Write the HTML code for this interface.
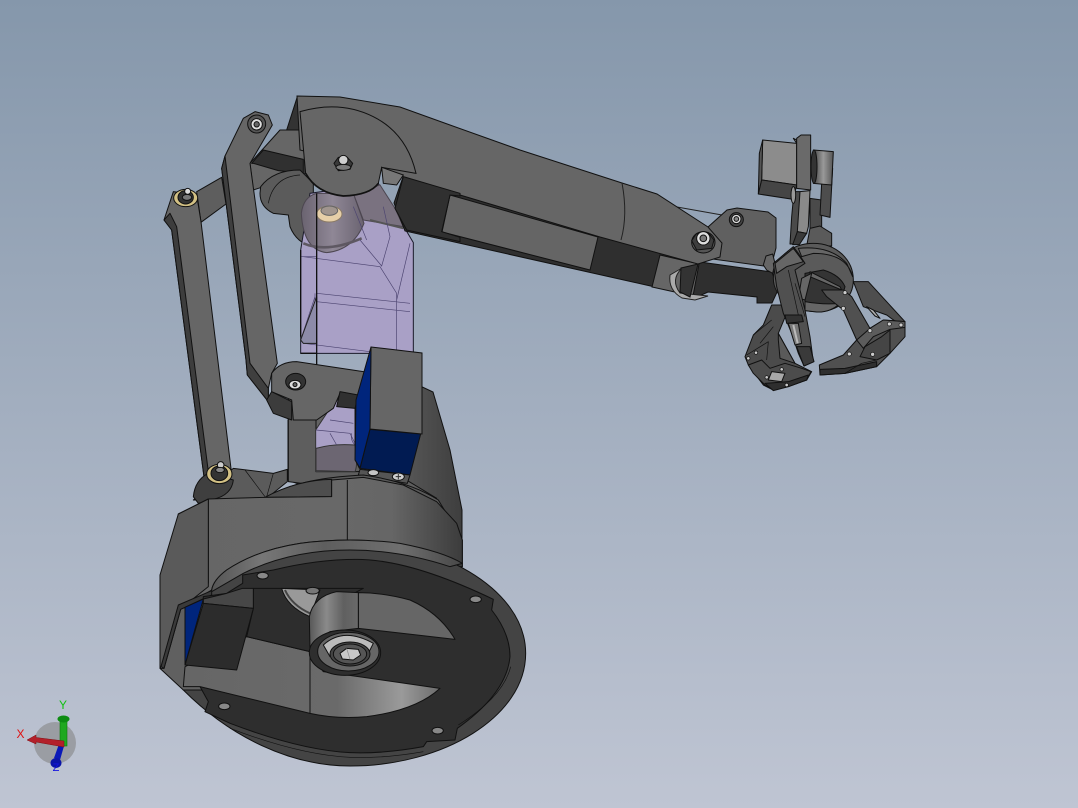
<!DOCTYPE html>
<html><head><meta charset="utf-8"><title>Robot arm CAD view</title>
<style>
html,body{margin:0;padding:0;width:1078px;height:808px;overflow:hidden}
body{background:linear-gradient(180deg,#8597ab 0%,#bfc5d3 100%)}
svg{display:block;position:absolute;left:0;top:0}
text{font-family:"Liberation Sans",sans-serif}
</style></head><body>
<svg width="1078" height="808" viewBox="0 0 1078 808" xmlns="http://www.w3.org/2000/svg">
<defs>
<linearGradient id="drum" x1="0" x2="1" y1="0" y2="0"><stop offset="0" stop-color="#666"/><stop offset=".55" stop-color="#686868"/><stop offset=".75" stop-color="#666"/><stop offset="1" stop-color="#3c3c3c"/></linearGradient>
<linearGradient id="back" x1="0" x2="1" y1="0" y2="0"><stop offset="0" stop-color="#666"/><stop offset=".6" stop-color="#5c5c5c"/><stop offset="1" stop-color="#3e3e3e"/></linearGradient>
<linearGradient id="rim" x1="0" x2="1" y1="0" y2="0"><stop offset="0" stop-color="#555"/><stop offset=".2" stop-color="#777"/><stop offset=".45" stop-color="#5e5e5e"/><stop offset=".75" stop-color="#6f6f6f"/><stop offset="1" stop-color="#484848"/></linearGradient>
<linearGradient id="cyl" x1="0" x2="1" y1="0" y2="0"><stop offset="0" stop-color="#585858"/><stop offset=".35" stop-color="#8a8a8a"/><stop offset=".7" stop-color="#606060"/><stop offset="1" stop-color="#6a6a6a"/></linearGradient>
<linearGradient id="low" x1="0" x2="1" y1="0" y2="0"><stop offset="0" stop-color="#666"/><stop offset=".6" stop-color="#6a6a6a"/><stop offset=".85" stop-color="#9a9a9a"/><stop offset="1" stop-color="#6c6c6c"/></linearGradient>
<linearGradient id="pul" x1="0" x2="1" y1="0" y2="0"><stop offset="0" stop-color="#6a6370"/><stop offset=".5" stop-color="#8f8796"/><stop offset="1" stop-color="#6a6370"/></linearGradient>
<linearGradient id="rol" x1="0" x2="1" y1="0" y2="0"><stop offset="0" stop-color="#444"/><stop offset=".5" stop-color="#999"/><stop offset="1" stop-color="#555"/></linearGradient>
</defs>

<!-- Rear drum -->
<path d="M418 385L433 392L450 450L462 510V570L420 560L340 500L288 480L288 420Z" fill="url(#back)" stroke="#111"/>

<!-- shoulder -->
<g transform="translate(140 80) scale(.33333)" stroke="#111" stroke-width="3" stroke-linejoin="round">
 <path d="M170 335L245 292L258 372L183 427Z" fill="#5e5e5e"/>
 <path d="M330 250L420 150L490 150L495 280L340 330Z" fill="#666"/>
 <path d="M440 150L472 50L482 150Z" fill="#333"/>
 <path d="M335 250L370 210L490 238V280L415 272L340 250Z" fill="#303030"/>
 <path d="M362 320Q400 270 480 270L520 310V500Q470 490 450 440L445 405L400 400Q360 380 360 340Z" fill="#5b5b5b"/>
 <path d="M385 370Q400 290 480 285" fill="none" stroke-width="2"/>
</g>

<!-- Purple translucent body -->
<g transform="translate(140 80) scale(.33333)" stroke="#1a1a2a" stroke-width="3">
 <path d="M482 510V820H820V488L715 310L510 340Z" fill="#a9a0c6"/>
 <path d="M484 400Q490 350 530 340L640 340L672 430Q640 510 560 518Q490 510 484 400Z" fill="url(#pul)" stroke="#4c4650"/>
 <path d="M490 490q70 30 175-15" fill="none" stroke="#5e5862" stroke-width="8"/>
 <ellipse cx="568" cy="402" rx="38" ry="24" fill="#e6cfa8" stroke="#8a7a66"/>
 <ellipse cx="568" cy="392" rx="25" ry="14" fill="#a0958e" stroke="#666"/>
 <path d="M670 420L790 440L765 385L720 315L640 340Z" fill="#7a7280" stroke="#4c4650"/>
 <path d="M690 420L790 445" stroke="#555" stroke-width="6" fill="none"/>
 <path d="M490 530L720 560L770 640V810M530 640L810 670M530 665L810 695M490 790L810 830M770 660L810 490M660 480L725 558L750 470L730 380M640 380L680 480M482 530H530M482 780L525 650M525 640V790H490" fill="none" stroke="#4c4470" stroke-width="2"/>
 <path d="M490 790H530V650L482 780Z" fill="#8d8ba8" stroke="#222"/>
 <path d="M482 510V770M530 340V855M482 820H530" fill="none" stroke="#111" stroke-width="4"/>
</g>

<!-- Main arm -->
<path d="M403 177L700 262L772 272L778 290L772 303H757V297L708 292L697 297L655 287L405 231L394 203Z" fill="#2f2f2f" stroke="#111"/>
<path d="M450 195L598 237L590 270L442 232Z" fill="#656565" stroke="#111"/>
<path d="M660 255L699 264L693 296L652 287Z" fill="#666" stroke="#111"/>
<path d="M677 207L722 215" stroke="#222" fill="none"/>
<path d="M708 227L727 210L737 208L768 212L776 218V248L771 267L705 258Z" fill="#606060" stroke="#111"/>
<path d="M297 96L340 97L400 107L450 125L520 150L622 183L657 194L708 227L722 243L720 257L698 264L600 237L450 192L403 177L380 170L300 150Z" fill="#666" stroke="#111"/>
<path d="M622 183Q628 215 621 240" fill="none" stroke="#222"/>
<path d="M682 268Q670 280 680 293L708 296L695 300L682 298Q668 290 670 275Z" fill="#aaa" stroke="#222"/>
<path d="M681 268L698 264L690 297L680 292Z" fill="#333" stroke="#111"/>

<!-- Cover plate -->
<g transform="translate(140 80) scale(.33333)" stroke="#111" stroke-width="3">
 <path d="M480 95Q600 60 700 110Q800 160 828 280L725 262L715 310Q690 345 610 348Q530 340 497 280Z" fill="#666"/>
 <path d="M497 280Q530 340 610 348Q690 345 715 310" fill="none" stroke-width="5"/>
 <path d="M790 290L960 340V348L930 345L905 455L960 472V485L800 450L765 385Z" fill="#303030"/>
 <path d="M725 262L790 285L770 315L730 310Z" fill="#777"/>
 <polygon points="582,250 595,232 622,232 638,250 630,268 595,272" fill="#3a3a3a"/>
 <circle cx="610" cy="240" r="14" fill="#cfcfcf"/>
 <ellipse cx="610" cy="262" rx="22" ry="9" fill="#7a7a7a"/>
</g>

<!-- Links front -->
<g transform="translate(140 80) scale(.33333)" stroke="#111" stroke-width="3" stroke-linejoin="round">
 <path d="M72 420L100 335L170 345L183 425L276 1190H192L95 450Z" fill="#666"/>
 <path d="M72 420L95 450L192 1190H207L110 440L90 400Z" fill="#3d3d3d"/>
 <ellipse cx="137" cy="354" rx="36" ry="26" fill="#d2c084"/>
 <ellipse cx="137" cy="352" rx="23" ry="20" fill="#333"/>
 <circle cx="143" cy="334" r="9" fill="#ddd"/>
 <ellipse cx="141" cy="352" rx="14" ry="9" fill="#777"/>
 <path d="M245 265L255 228L310 115L345 95L385 105L397 135L330 250L412 850L395 880L385 925L385 965L322 885L318 840Z" fill="#666"/>
 <path d="M245 265L255 228L330 850L385 925L385 965L322 885L318 840Z" fill="#3f3f3f"/>
 <circle cx="350" cy="132" r="27" fill="#555"/>
 <circle cx="350" cy="133" r="17" fill="#ddd"/>
 <circle cx="350" cy="133" r="8" fill="#666"/>
</g>

<!-- Base -->
<g transform="translate(150 400) scale(.33333)" stroke="#111" stroke-width="3" stroke-linejoin="round">
 <path d="M415 -50L498 -50V215L620 215L720 210L860 295L760 290L415 245Z" fill="#5e5e5e"/>
 <path d="M498 0Q505 30 540 15L530 40L497 90V215L615 215V0Z" fill="#a9a0c6" stroke="#333"/>
 <path d="M498 145Q550 130 615 135Q625 190 615 215L498 212Z" fill="#6c6672" stroke="#333"/>
 <path d="M498 90L600 100L615 130M540 60L610 70M540 100L560 135M605 100Q600 120 615 135" fill="none" stroke="#4c4470" stroke-width="2"/>
 <path d="M615 -50L672 -50L660 88L628 205L616 180Z" fill="#00257c"/>
 <path d="M660 88L812 102L780 225L630 205Z" fill="#011b52"/>
 <path d="M630 208L780 225L772 250L625 225Z" fill="#555"/>
 <ellipse cx="670" cy="218" rx="16" ry="9" fill="#c5c5c5"/>
 <ellipse cx="745" cy="230" rx="18" ry="11" fill="#cfcfcf"/>
 <path d="M737 230h16M745 222v16" stroke="#333"/>
 <path d="M250 205L370 220L412 208V245L350 295L130 300Z" fill="#5b5b5b"/>
 <path d="M285 210L345 290M370 220L350 290" fill="none" stroke-width="2"/>
 <path d="M130 290Q135 240 175 220L250 240Q245 285 190 298L145 310Z" fill="#3f3f3f"/>
 <ellipse cx="208" cy="222" rx="38" ry="29" fill="#d2c084"/>
 <ellipse cx="208" cy="220" rx="25" ry="22" fill="#333"/>
 <circle cx="212" cy="195" r="10" fill="#ccc"/>
 <ellipse cx="210" cy="210" rx="13" ry="8" fill="#888"/>
 <path d="M355 290Q440 235 640 225Q780 245 865 300L937 420V500L400 300Z" fill="#595959"/>
 <path d="M345 292Q440 240 545 238V290Z" fill="#4e4e4e"/>
 <path d="M85 342L175 297L345 292L545 290V240L640 232L760 255L860 305L920 370L937 420V500L300 500L190 570L100 620L85 620Z" fill="url(#drum)"/>
 <path d="M175 297V550M592 240V420" fill="none"/>
 <!-- disk outer -->
 <path d="M185 570Q190 540 230 510Q320 450 450 430Q525 420 600 420C850 420 1127 560 1127 760C1127 950 880 1098 600 1098C420 1098 240 1010 100 870V620Z" fill="#444"/>
 <path d="M185 570Q190 540 230 510Q320 450 450 430Q600 410 750 430Q880 455 937 490L900 500Q750 450 600 450Q420 450 280 520L185 575Z" fill="url(#rim)"/>
 <!-- left frame -->
 <path d="M85 342L175 297V560L100 620H85L35 800L30 805V525Z" fill="#5a5a5a"/>
 <path d="M92 628L185 585V870H100L30 805L42 805Z" fill="#606060"/>
 <path d="M185 572L85 615L33 800L42 805L92 628L185 585Z" fill="#3a3a3a"/>
 <!-- face -->
 <path d="M278 525L370 510Q500 478 620 478Q780 478 1030 598L1025 630Q1080 700 1080 770Q1070 880 922 985L915 1020L830 1025L820 1040Q700 1062 600 1058Q450 1050 240 970L165 935L175 905L150 860L160 590L230 580L278 550Z" fill="#2e2e2e"/>
 <path d="M1082 800Q1060 890 925 975M240 985Q450 1065 600 1072Q700 1076 820 1055" fill="none" stroke-width="2"/>
 <!-- interior -->
 <path d="M105 800L290 710L480 755L520 815L870 865Q800 930 650 950Q560 958 480 940L150 860L100 860Z" fill="url(#low)"/>
 <path d="M480 755V940" fill="none"/>
 <path d="M310 565L640 565L480 650V755L290 710L310 625Z" fill="#2d2d2d"/>
 <path d="M160 597L230 580L278 565H310V625L160 610Z" fill="#474747"/>
 <path d="M395 565Q410 620 480 650L510 570Z" fill="#999"/>
 <path d="M405 570Q425 615 480 640" fill="none" stroke="#444" stroke-width="6"/>
 <ellipse cx="488" cy="572" rx="20" ry="10" fill="#777"/>
 <path d="M160 610L310 625L260 810L105 795Z" fill="#2c2c2c"/>
 <path d="M160 597L105 622V795Z" fill="#00257c"/>
 <path d="M625 578Q700 578 780 600Q870 640 915 718L625 685Z" fill="#666"/>
 <path d="M478 650Q490 590 560 575L625 578V685L540 695L480 745Z" fill="url(#cyl)"/>
 <ellipse cx="585" cy="758" rx="107" ry="68" fill="#2e2e2e"/>
 <ellipse cx="595" cy="755" rx="92" ry="58" fill="#666"/>
 <path d="M520 735Q580 680 670 730L650 770H540Z" fill="#bbb"/>
 <ellipse cx="600" cy="762" rx="60" ry="36" fill="#444"/>
 <ellipse cx="600" cy="762" rx="50" ry="30" fill="#555"/>
 <polygon points="570,760 590,745 625,748 632,765 610,780 577,777" fill="#c9c9c9"/>
 <path d="M590 745L600 778" fill="none" stroke="#888" stroke-width="2"/>
 <ellipse cx="338" cy="527" rx="17" ry="10" fill="#888"/>
 <ellipse cx="977" cy="598" rx="17" ry="10" fill="#888"/>
 <ellipse cx="223" cy="919" rx="17" ry="10" fill="#888"/>
 <ellipse cx="863" cy="992" rx="17" ry="10" fill="#888"/>
</g>

<!-- Lower pivot plate -->
<g transform="translate(140 80) scale(.33333)" stroke="#111" stroke-width="3" stroke-linejoin="round">
 <path d="M395 880Q420 845 470 845L690 878L665 950L600 940L580 985L530 1020H460L455 960L395 935Z" fill="#666"/>
 <path d="M395 935L455 965V1020L400 1000L380 960Z" fill="#3c3c3c"/>
 <path d="M600 935L655 945L645 985L590 980Z" fill="#303030"/>
 <ellipse cx="467" cy="905" rx="30" ry="25" fill="#333"/>
 <ellipse cx="465" cy="914" rx="18" ry="13" fill="#ddd"/>
 <circle cx="465" cy="914" r="6" fill="#666"/>
</g>

<!-- Blue box front face -->
<path d="M371 347L422 353V434L370 429Z" fill="#666" stroke="#111"/>
<path d="M371 347L356 400L355 460L360 468L370 429Z" fill="#00257c" stroke="#111"/>

<!-- Wrist bolts -->
<g transform="translate(640 120) scale(.33333)" stroke="#111" stroke-width="3" stroke-linejoin="round">
 <ellipse cx="190" cy="367" rx="35" ry="32" fill="#555"/>
 <polygon points="155,362 168,342 205,338 222,360 215,385 170,390" fill="#3e3e3e"/>
 <circle cx="190" cy="355" r="20" fill="#ddd"/>
 <circle cx="190" cy="355" r="10" fill="#777"/>
 <circle cx="289" cy="299" r="21" fill="#444"/>
 <circle cx="289" cy="297" r="14" fill="#ddd"/>
 <circle cx="289" cy="297" r="7" fill="#888"/>
 <!-- motor -->
 <path d="M510 235L545 240V320L510 325Z" fill="#4a4a4a"/>
 <path d="M545 190L578 145L570 292L540 285Z" fill="#4d4d4d"/>
 <path d="M368 60L470 70L470 195L365 180Z" fill="#8c8c8c"/>
 <path d="M368 60L358 100L355 222L365 180Z" fill="#555"/>
 <path d="M365 180L470 195L460 238L355 222Z" fill="#454545"/>
 <path d="M460 55L470 70V60Z" fill="#999"/>
 <path d="M470 55L483 45H512V210L470 205Z" fill="#6a6a6a"/>
 <path d="M520 90L580 95L575 195L520 190Z" fill="url(#rol)"/>
 <ellipse cx="522" cy="140" rx="9" ry="50" fill="#333"/>
 <path d="M455 290L462 215L480 215L478 372H450Z" fill="#4a4a4a"/>
 <ellipse cx="460" cy="225" rx="7" ry="25" fill="#999"/>
 <path d="M480 215L510 212L505 320L500 340L472 335Z" fill="#8a8a8a"/>
 <path d="M472 335L500 340L478 374L458 374Z" fill="#3a3a3a"/>
 <path d="M510 325L540 318L575 340V378H500Z" fill="#5a5a5a"/>
</g>

<!-- Gripper -->
<g transform="translate(730 240) scale(.33333)" stroke="#111" stroke-width="3" stroke-linejoin="round">
 <path d="M370 125H415L470 185L525 245V265L470 225L400 200Z" fill="#4e4e4e"/>
 <path d="M250 10C320 10 370 60 370 120C370 170 330 215 260 215C190 215 130 170 130 115C130 60 180 10 250 10Z" fill="#5a5a5a"/>
 <path d="M205 25Q300 15 350 70L368 110Q350 40 250 40L215 50Z" fill="#666"/>
 <path d="M225 100L280 90Q330 105 345 140L335 175L320 195L280 210H225Z" fill="#343434"/>
 <path d="M225 185Q280 195 330 190Q300 218 260 216L225 212Z" fill="#666"/>
 <path d="M240 95L330 140L335 150L240 110Z" fill="#666"/>
 <path d="M215 115L245 100L225 180L205 175Z" fill="#666"/>
 <path d="M100 75L108 48L128 42L135 70L128 100L110 90Z" fill="#666"/>
 <path d="M125 195H165L170 220L145 280L195 370L245 395L230 420L130 450L100 435L55 375L45 350L70 285L100 255Z" fill="#4b4b4b"/>
 <path d="M145 280L195 370L150 355L145 300Z" fill="#5a5a5a"/>
 <path d="M70 285L125 240M50 345L115 305L110 360M90 310L130 260" fill="none" stroke-width="2"/>
 <path d="M55 375L95 360L120 385L165 370L215 385L243 395L230 420L175 440L130 450L105 435L70 400Z" fill="#4c4c4c"/>
 <path d="M125 395L165 400L155 425L115 420Z" fill="#a8a8a8"/>
 <path d="M105 430L175 425L235 405L230 420L175 440L130 452Z" fill="#2e2e2e"/>
 <path d="M130 70L190 20L205 40L225 70L195 90L225 210L240 290L250 365L222 378L205 340L185 280L160 220L140 140Z" fill="#505050"/>
 <path d="M135 70L190 25L220 65L170 80L140 100Z" fill="#666"/>
 <path d="M165 225L215 225L220 245L170 250Z" fill="#333"/>
 <path d="M175 250L205 250L215 310L195 315Z" fill="#7a7a7a"/>
 <path d="M190 255L203 310" stroke="#bbb" stroke-width="6" fill="none"/>
 <path d="M200 320L240 320L252 365L222 378Z" fill="#3a3a3a"/>
 <path d="M175 90L205 225M195 130L225 230" fill="none" stroke-width="2"/>
 <path d="M275 150L340 150L365 170L420 265L460 240L525 245V290L480 340L440 380L345 400L270 405L268 375L340 345L380 300L340 210L290 170Z" fill="#505050"/>
 <path d="M270 388L345 385L440 365L440 380L345 400L270 405Z" fill="#2f2f2f"/>
 <path d="M420 265L460 240L525 245L525 262L480 268L430 290L400 325L380 300Z" fill="#5c5c5c"/>
 <path d="M405 320L455 290L480 270L480 340L440 360L390 350Z" fill="#454545"/>
 <path d="M410 200L430 210L450 235L435 228Z" fill="#b0b0b0"/>
 <path d="M345 400L395 370L440 360" fill="none" stroke-width="2"/>
 <g fill="#ccc" stroke-width="2">
  <circle cx="345" cy="158" r="6"/><circle cx="340" cy="205" r="6"/><circle cx="420" cy="272" r="6"/><circle cx="478" cy="252" r="6"/><circle cx="513" cy="255" r="6"/><circle cx="358" cy="342" r="6"/><circle cx="428" cy="343" r="6"/><circle cx="78" cy="338" r="5"/><circle cx="55" cy="355" r="5"/><circle cx="110" cy="412" r="5"/><circle cx="155" cy="388" r="5"/><circle cx="170" cy="435" r="5"/>
 </g>
</g>

<!-- Triad -->
<g transform="translate(0 690)">
 <circle cx="55" cy="53" r="21" fill="#9a9da3"/>
 <rect x="60" y="31" width="7" height="25" fill="#1fa81f" stroke="#0c7a0c" stroke-width=".6"/>
 <ellipse cx="63.500" cy="29" rx="6" ry="3.500" fill="#0d8c12"/>
 <path d="M64 56L60 70L54 68L59 54Z" fill="#0a19b8"/>
 <ellipse cx="56" cy="73" rx="5.500" ry="5" fill="#0a14a8"/>
 <path d="M64 51L36 47.500V45L27 50L36 54V52L64 57Z" fill="#b3202a" stroke="#7f1014" stroke-width=".5"/>
 <text x="20.500" y="48" font-size="12" fill="#e01010" text-anchor="middle">X</text>
 <text x="63" y="19" font-size="12" fill="#12c012" text-anchor="middle">Y</text>
 <text x="56" y="81" font-size="11" fill="#1414e0" text-anchor="middle">Z</text>
</g>
</svg>
</body></html>
